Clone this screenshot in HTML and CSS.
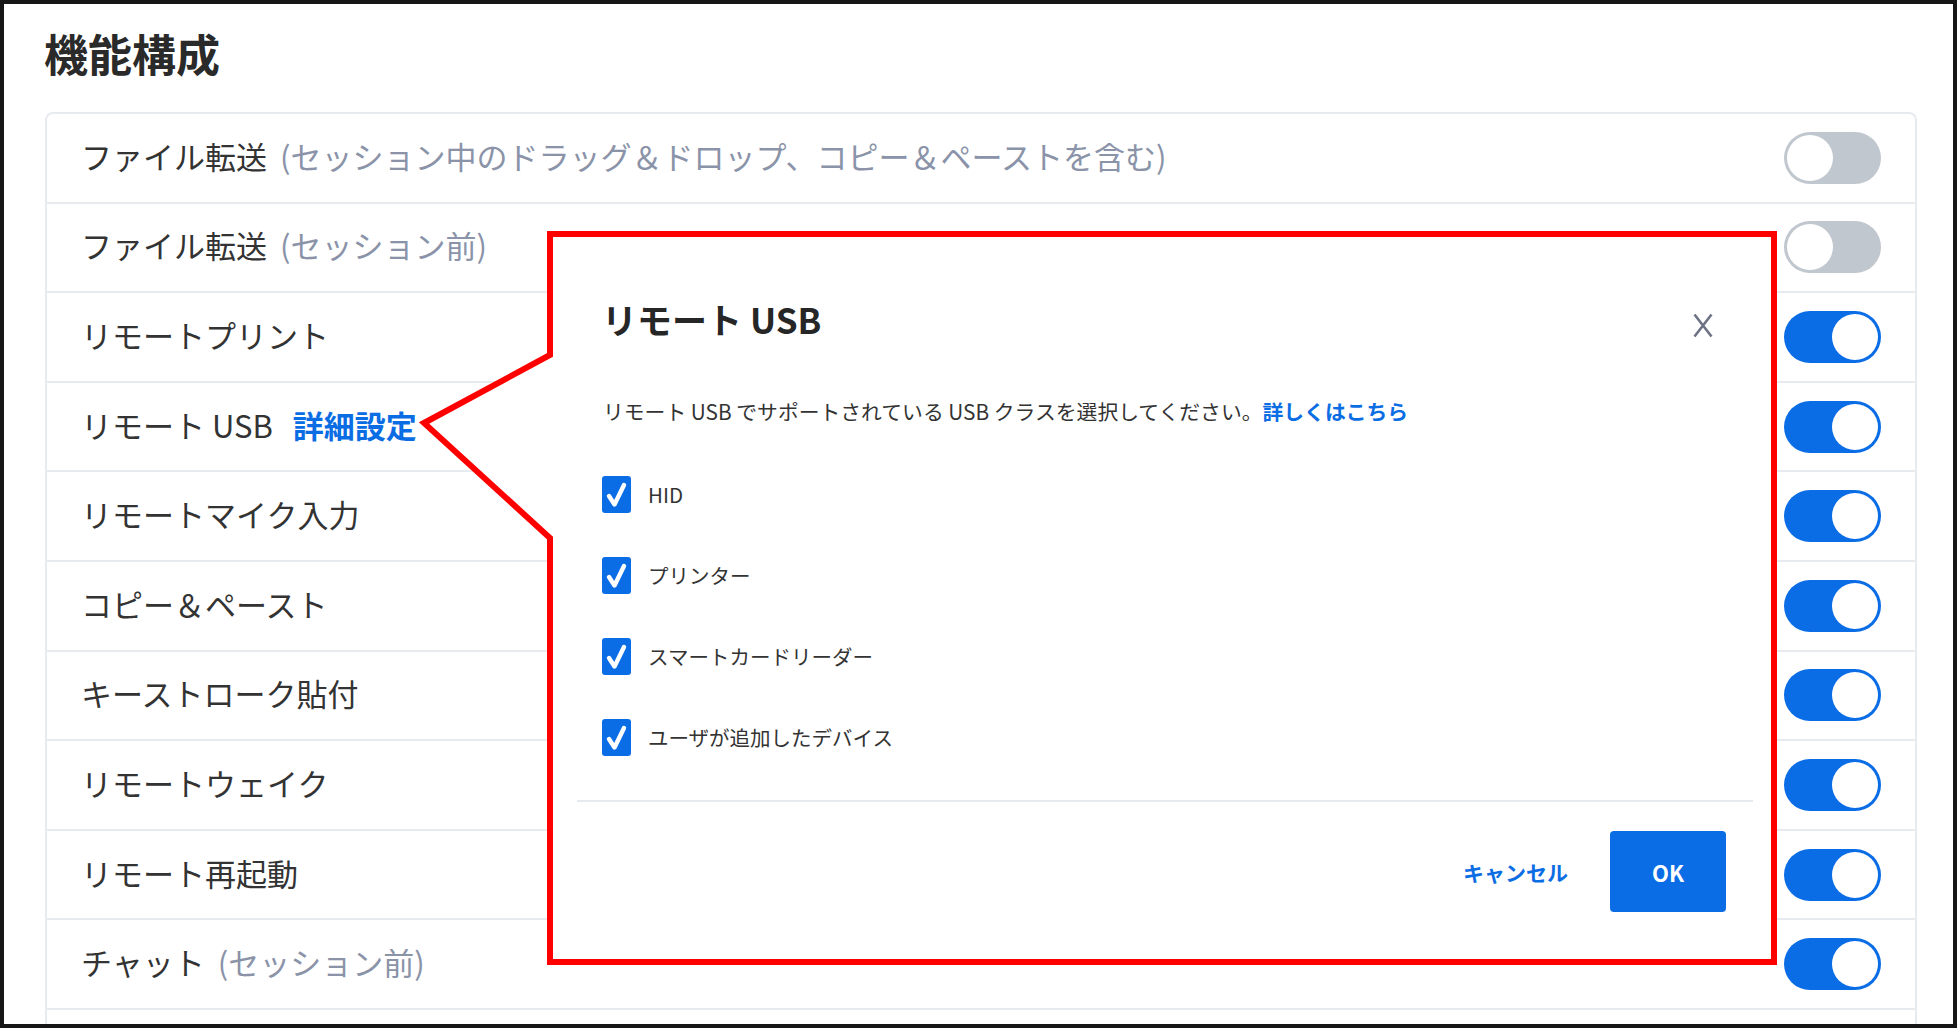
FILE: index.html
```html
<!DOCTYPE html>
<html lang="ja">
<head>
<meta charset="utf-8">
<title>機能構成</title>
<link rel="stylesheet" href="styles.css">
</head>
<body>
<div class="frame">
  <div class="page">
    <h1 class="page-title">機能構成</h1>
    <div class="card">
      <div class="row"><div class="label">ファイル転送<span class="note">(セッション中のドラッグ＆ドロップ、コピー＆ペーストを含む)</span></div><span class="toggle"></span></div>
      <div class="row"><div class="label">ファイル転送<span class="note">(セッション前)</span></div><span class="toggle"></span></div>
      <div class="row"><div class="label">リモートプリント</div><span class="toggle on"></span></div>
      <div class="row"><div class="label">リモート USB<a class="detail">詳細設定</a></div><span class="toggle on"></span></div>
      <div class="row"><div class="label">リモートマイク入力</div><span class="toggle on"></span></div>
      <div class="row"><div class="label">コピー＆ペースト</div><span class="toggle on"></span></div>
      <div class="row"><div class="label">キーストローク貼付</div><span class="toggle on"></span></div>
      <div class="row"><div class="label">リモートウェイク</div><span class="toggle on"></span></div>
      <div class="row"><div class="label">リモート再起動</div><span class="toggle on"></span></div>
      <div class="row"><div class="label">チャット<span class="note">(セッション前)</span></div><span class="toggle on"></span></div>
      <div class="row"></div>
    </div>
  </div>

  <svg class="callout" viewBox="0 0 1957 1028" width="1957" height="1028">
    <polygon points="550,234 1774,234 1774,962 550,962 550,538 424,423 550,355" fill="#ffffff" stroke="#ff0000" stroke-width="6" stroke-linejoin="miter" stroke-miterlimit="10"/>
  </svg>

  <div class="dialog">
    <div class="dlg-head">
      <h2 class="dlg-title">リモート USB</h2>
      <svg class="dlg-close" viewBox="0 0 20 25" width="20" height="25"><path d="M1.5 1.5 L18.5 23.5 M18.5 1.5 L1.5 23.5" stroke="#6e7285" stroke-width="2.6" fill="none"/></svg>
    </div>
    <p class="dlg-desc">リモート USB でサポートされている USB クラスを選択してください。<a class="dlg-link">詳しくはこちら</a></p>
    <ul class="dlg-list">
      <li class="dlg-item"><span class="cbx"><svg viewBox="0 0 29 37" width="29" height="37"><polyline points="7,20 12.5,28.5 22,9" fill="none" stroke="#fff" stroke-width="4.4" stroke-linecap="round" stroke-linejoin="round"/></svg></span>HID</li>
      <li class="dlg-item"><span class="cbx"><svg viewBox="0 0 29 37" width="29" height="37"><polyline points="7,20 12.5,28.5 22,9" fill="none" stroke="#fff" stroke-width="4.4" stroke-linecap="round" stroke-linejoin="round"/></svg></span>プリンター</li>
      <li class="dlg-item"><span class="cbx"><svg viewBox="0 0 29 37" width="29" height="37"><polyline points="7,20 12.5,28.5 22,9" fill="none" stroke="#fff" stroke-width="4.4" stroke-linecap="round" stroke-linejoin="round"/></svg></span>スマートカードリーダー</li>
      <li class="dlg-item"><span class="cbx"><svg viewBox="0 0 29 37" width="29" height="37"><polyline points="7,20 12.5,28.5 22,9" fill="none" stroke="#fff" stroke-width="4.4" stroke-linecap="round" stroke-linejoin="round"/></svg></span>ユーザが追加したデバイス</li>
    </ul>
    <div class="dlg-divider"></div>
    <div class="dlg-foot">
      <a class="btn-cancel">キャンセル</a>
      <a class="btn-ok">OK</a>
    </div>
  </div>
</div>
</body>
</html>
```

FILE: styles.css
```css
* { box-sizing: border-box; }
html, body { margin: 0; padding: 0; background: #ffffff; }
body {
  font-family: "Noto Sans CJK JP", "Noto Sans", sans-serif;
  color: #333333;
}
.frame {
  position: relative;
  width: 1957px;
  height: 1028px;
  border: 4px solid #161616;
  overflow: hidden;
  background: #ffffff;
}
.page {
  padding: 22.5px 36px 0 41px;
}
.page-title {
  margin: 0 0 0 -1px;
  font-size: 44px;
  line-height: 52px;
  font-weight: 700;
  color: #2a2a2a;
}
.card {
  margin-top: 33.5px;
  border: 2px solid #e7eaee;
  border-radius: 8px;
}
.row {
  height: 89.6px;
  border-bottom: 2px solid #e7eaee;
  display: flex;
  align-items: center;
  justify-content: space-between;
  padding: 0 34px 0 34px;
}
.label {
  font-size: 31px;
  line-height: 40px;
  padding-bottom: 4px;
  color: #333333;
  white-space: nowrap;
}
.note {
  color: #8a93a8;
  margin-left: 13px;
}
.detail {
  color: #0b6de3;
  font-weight: 700;
  margin-left: 20px;
}
.toggle {
  position: relative;
  flex: none;
  width: 97px;
  height: 52px;
  border-radius: 26px;
  background: #c1c7ce;
}
.toggle::after {
  content: "";
  position: absolute;
  top: 3px;
  left: 3px;
  width: 46px;
  height: 46px;
  border-radius: 50%;
  background: #ffffff;
}
.toggle.on { background: #0a6de6; }
.toggle.on::after { left: 48px; }

.callout {
  position: absolute;
  left: -4px;
  top: -4px;
}
.dialog {
  position: absolute;
  left: 556px;
  top: 236px;
  width: 1210px;
  padding-top: 57px;
}
.dlg-head {
  display: flex;
  align-items: center;
  justify-content: space-between;
  padding: 0 57px 0 42px;
}
.dlg-title {
  margin: 0;
  font-size: 35px;
  line-height: 44px;
  font-weight: 700;
  color: #262626;
}
.dlg-close { margin-top: 12px; }
.dlg-desc {
  margin: 55px 0 0;
  padding-left: 43px;
  font-size: 20.8px;
  line-height: 30px;
  color: #333333;
}
.dlg-link {
  color: #0b6de3;
  font-weight: 700;
  margin-left: 0;
}
.dlg-list {
  list-style: none;
  margin: 27.5px 0 0;
  padding: 0 0 0 42px;
}
.dlg-item {
  height: 81px;
  display: flex;
  align-items: center;
  font-size: 20.5px;
  color: #333333;
}
.cbx {
  width: 29px;
  height: 37px;
  border-radius: 3px;
  background: #0a6de6;
  margin-right: 17px;
  display: flex;
}
.dlg-divider {
  margin: 22.5px 17px 0;
  height: 2px;
  background: #e6e9ed;
}
.dlg-foot {
  margin-top: 29px;
  display: flex;
  justify-content: flex-end;
  align-items: center;
  gap: 42px;
  padding-right: 44px;
}
.btn-cancel {
  color: #0b6de3;
  font-weight: 700;
  font-size: 21px;
}
.btn-ok {
  width: 116px;
  height: 81px;
  border-radius: 4px;
  background: #0a6de6;
  color: #ffffff;
  font-weight: 700;
  font-size: 22px;
  display: flex;
  align-items: center;
  justify-content: center;
}
```
